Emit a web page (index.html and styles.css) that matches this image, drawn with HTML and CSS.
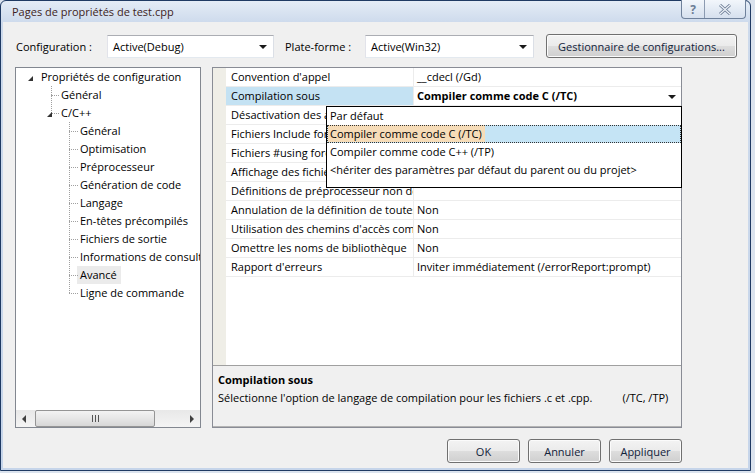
FILE: index.html
```html
<!DOCTYPE html>
<html lang="fr">
<head>
    <meta charset="UTF-8">
    <link rel="stylesheet" href="styles.css">
    <title>Pages de propriétés de test.cpp</title>
</head>
<body>
    <div class="window">
        <div class="titlebar">
            <span class="title">Pages de propriétés de test.cpp</span>
            <div class="caption">
                <span class="cap-btn cap-help">?</span>
                <span class="cap-btn cap-close">
                    <svg width="14" height="11" viewBox="0 0 14 11">
                        <path d="M2 1 L12 10 M12 1 L2 10" stroke="#6c7d96" stroke-width="3" fill="none"/>
                        <path d="M2 1 L12 10 M12 1 L2 10" stroke="#eef2f8" stroke-width="1.2" fill="none"/>
                    </svg>
                </span>
            </div>
        </div>

        <div class="client">
            <!-- configuration / plate-forme -->
            <div class="toolbar">
                <span class="lbl lbl-config">Configuration :</span>
                <div class="combo combo-config">Active(Debug)<span class="arrow"></span></div>
                <span class="lbl lbl-platform">Plate-forme :</span>
                <div class="combo combo-platform">Active(Win32)<span class="arrow"></span></div>
                <button class="btn btn-manager">Gestionnaire de configurations...</button>
            </div>

            <div class="main">
                <!-- arbre de navigation -->
                <div class="tree">
                    <div class="tree-list">
                        <div class="row lvl0"><span class="exp"></span>Propriétés de configuration</div>
                        <div class="group g1">
                            <div class="row lvl1">Général</div>
                            <div class="row lvl1"><span class="exp"></span>C/C++</div>
                        </div>
                        <div class="group g2">
                            <div class="row lvl2">Général</div>
                            <div class="row lvl2">Optimisation</div>
                            <div class="row lvl2">Préprocesseur</div>
                            <div class="row lvl2">Génération de code</div>
                            <div class="row lvl2">Langage</div>
                            <div class="row lvl2">En-têtes précompilés</div>
                            <div class="row lvl2">Fichiers de sortie</div>
                            <div class="row lvl2">Informations de consultation</div>
                            <div class="row lvl2"><span class="selected">Avancé</span></div>
                            <div class="row lvl2">Ligne de commande</div>
                        </div>
                    </div>
                    <div class="hscroll">
                        <span class="sb-arrow sb-left"></span>
                        <span class="sb-thumb"><span class="grip"></span></span>
                        <span class="sb-arrow sb-right"></span>
                    </div>
                </div>

                <!-- grille de propriétés -->
                <div class="pane">
                    <div class="grid">
                        <div class="prop"><span class="gut"></span><span class="name">Convention d'appel</span><span class="val">__cdecl (/Gd)</span></div>
                        <div class="prop active"><span class="gut"></span><span class="name">Compilation sous</span><span class="val">Compiler comme code C (/TC)<span class="arrow"></span></span></div>
                        <div class="prop"><span class="gut"></span><span class="name">Désactivation des avertissements spécifiques</span><span class="val"></span></div>
                        <div class="prop"><span class="gut"></span><span class="name">Fichiers Include forcés</span><span class="val"></span></div>
                        <div class="prop"><span class="gut"></span><span class="name">Fichiers #using forcés</span><span class="val"></span></div>
                        <div class="prop"><span class="gut"></span><span class="name">Affichage des fichiers Include</span><span class="val"></span></div>
                        <div class="prop"><span class="gut"></span><span class="name">Définitions de préprocesseur non définies</span><span class="val"></span></div>
                        <div class="prop"><span class="gut"></span><span class="name">Annulation de la définition de toutes</span><span class="val">Non</span></div>
                        <div class="prop"><span class="gut"></span><span class="name">Utilisation des chemins d'accès complets</span><span class="val">Non</span></div>
                        <div class="prop"><span class="gut"></span><span class="name">Omettre les noms de bibliothèque</span><span class="val">Non</span></div>
                        <div class="prop"><span class="gut"></span><span class="name">Rapport d'erreurs</span><span class="val">Inviter immédiatement (/errorReport:prompt)</span></div>
                        <div class="gutter-fill"></div>

                        <div class="dropdown">
                            <div class="opt">Par défaut</div>
                            <div class="opt current"><span class="hot">Compiler comme code C (/TC)</span></div>
                            <div class="opt">Compiler comme code C++ (/TP)</div>
                            <div class="opt">&lt;hériter des paramètres par défaut du parent ou du projet&gt;</div>
                        </div>
                    </div>
                    <div class="desc">
                        <div class="desc-title">Compilation sous</div>
                        <div>Sélectionne l'option de langage de compilation pour les fichiers .c et .cpp.<span class="switches">(/TC, /TP)</span></div>
                    </div>
                </div>
            </div>

            <div class="footer">
                <button class="btn">OK</button>
                <button class="btn">Annuler</button>
                <button class="btn">Appliquer</button>
            </div>
        </div>
    </div>
</body>
</html>
```

FILE: styles.css
```css
* {
    box-sizing: border-box;
}

body {
    margin: 0;
    width: 755px;
    height: 473px;
    overflow: hidden;
    background: #dbe3ee;
    font-family: "Open Sans", "Noto Sans", sans-serif;
    font-size: 11px;
    color: #000;
}

/* fenêtre */
.window {
    width: 751px;
    height: 471px;
    border: 1px solid #1f3a63;
    border-radius: 6px 6px 0 0;
    background: linear-gradient(#e4ecf6, #cddaec 22px, #c6d5ea);
    display: flex;
    flex-direction: column;
}

.titlebar {
    height: 21px;
    position: relative;
}

.title {
    display: block;
    padding: 3px 0 0 11px;
    color: #3e1d22;
}

.caption {
    position: absolute;
    top: -1px;
    right: 4px;
    display: flex;
    border: 1px solid #6f819b;
    border-top: none;
    border-radius: 0 0 4px 4px;
    overflow: hidden;
    background: linear-gradient(#f2f6fb, #d6e0ee);
}

.cap-btn {
    height: 18px;
    display: flex;
    align-items: center;
    justify-content: center;
}

.cap-help {
    width: 23px;
    border-right: 1px solid #8c9bb1;
    color: #6c7d96;
    font-size: 12px;
    font-weight: bold;
}

.cap-close {
    width: 40px;
}

.client {
    flex: 1;
    margin: 0 2px 2px;
    background: #f0f0f0;
}

/* barre du haut */
.toolbar {
    display: flex;
    align-items: center;
    height: 24px;
    margin: 12px 0 0 13px;
}

.lbl-config {
    width: 91px;
}

.lbl-platform {
    width: 80px;
    margin-left: 11px;
}

.combo {
    position: relative;
    height: 23px;
    line-height: 21px;
    padding-left: 5px;
    background: #fff;
    border: 1px solid #abadb3;
    border-color: #abadb3 #dbdfe6 #e3e9ef #e2e3ea;
}

.combo-config {
    width: 167px;
}

.combo-platform {
    width: 169px;
}

.arrow {
    position: absolute;
    right: 6px;
    top: 9px;
    width: 0;
    height: 0;
    border-left: 4px solid transparent;
    border-right: 4px solid transparent;
    border-top: 4px solid #1a1a1a;
}

.btn {
    height: 24px;
    padding: 0;
    font: inherit;
    color: #12233b;
    border: 1px solid #707070;
    border-radius: 3px;
    background: linear-gradient(#f3f3f3 0%, #ebebeb 48%, #dddddd 52%, #cfcfcf 100%);
    box-shadow: inset 0 0 0 1px #fbfbfb;
}

.btn-manager {
    width: 191px;
    margin-left: 12px;
}

/* zone principale */
.main {
    display: flex;
    gap: 11px;
    height: 361px;
    margin: 9px 0 0 12px;
}

.tree {
    width: 186px;
    display: flex;
    flex-direction: column;
    background: #fff;
    border: 1px solid #828790;
}

.tree-list {
    flex: 1;
    overflow: hidden;
}

.row {
    position: relative;
    height: 18px;
    line-height: 18px;
    white-space: nowrap;
}

.lvl0 {
    padding-left: 25px;
}

.lvl1 {
    padding-left: 45px;
}

.lvl2 {
    padding-left: 64px;
}

.lvl1::before,
.lvl2::before {
    content: "";
    position: absolute;
    top: 9px;
    border-top: 1px dotted #a0a0a0;
}

.lvl1::before {
    left: 35px;
    width: 8px;
}

.lvl2::before {
    left: 53px;
    width: 9px;
}

.group {
    position: relative;
}

.group::before {
    content: "";
    position: absolute;
    top: 0;
    bottom: 9px;
    border-left: 1px dotted #a0a0a0;
}

.g1::before {
    left: 35px;
}

.g2::before {
    left: 53px;
}

.exp {
    position: absolute;
    top: 8px;
    width: 0;
    height: 0;
    border-left: 5px solid transparent;
    border-bottom: 5px solid #333;
    z-index: 1;
}

.lvl0 .exp {
    left: 12px;
}

.lvl1 .exp {
    left: 31px;
}

.selected {
    display: inline-block;
    margin-left: -3px;
    padding: 0 4px 0 3px;
    background: #ebebeb;
}

.hscroll {
    height: 17px;
    display: flex;
    align-items: center;
    position: relative;
    background: linear-gradient(#e8e8e8, #f4f4f4);
}

.sb-arrow {
    position: absolute;
    top: 5px;
    width: 0;
    height: 0;
    border-top: 4px solid transparent;
    border-bottom: 4px solid transparent;
}

.sb-left {
    left: 6px;
    border-right: 4px solid #404040;
}

.sb-right {
    right: 6px;
    border-left: 4px solid #404040;
}

.sb-thumb {
    position: absolute;
    left: 19px;
    top: 0;
    width: 120px;
    height: 17px;
    border: 1px solid #959595;
    border-radius: 2px;
    background: linear-gradient(#f3f3f3, #e6e6e6 50%, #d7d7d7);
    display: flex;
    align-items: center;
    justify-content: center;
}

.grip {
    width: 7px;
    height: 7px;
    background: repeating-linear-gradient(90deg, #555 0 1px, transparent 1px 3px);
}

/* grille */
.pane {
    width: 470px;
    display: flex;
    flex-direction: column;
    border: 1px solid #898c95;
}

.grid {
    flex: 1;
    position: relative;
    background: #fff;
    display: flex;
    flex-direction: column;
}

.prop {
    display: grid;
    grid-template-columns: 13px 188px 1fr;
    height: 19px;
    line-height: 18px;
    white-space: nowrap;
}

.gut {
    background: #efeee7;
}

.gutter-fill {
    width: 13px;
    flex: 1;
    background: #efeee7;
}

.name,
.val {
    overflow: hidden;
    border-bottom: 1px solid #ececec;
}

.name {
    padding-left: 5px;
    border-right: 1px solid #ececec;
}

.val {
    position: relative;
    padding-left: 3px;
}

.active .name {
    background: #c4e2f3;
}

.active .val {
    font-weight: bold;
}

.active .arrow {
    top: 8px;
    right: 5px;
}

.dropdown {
    position: absolute;
    left: 113px;
    top: 38px;
    width: 356px;
    height: 82px;
    background: #fff;
    border: 1px solid #000;
}

.opt {
    height: 18px;
    line-height: 18px;
    padding-left: 3px;
    white-space: nowrap;
}

.opt.current {
    padding-left: 1px;
    background: #c5e4f5;
    outline: 1px dotted #333;
    outline-offset: -1px;
}

.hot {
    display: inline-block;
    height: 17px;
    padding: 0 3px 0 2px;
    background: #f6dcb8;
}

.desc {
    height: 62px;
    padding: 5px 5px 0;
    line-height: 18px;
    background: #f0f0f0;
    border-top: 1px solid #a0a0a0;
    border-bottom: 1px solid #b4b4b4;
}

.desc-title {
    font-weight: bold;
}

.switches {
    margin-left: 30px;
}

/* boutons */
.footer {
    display: flex;
    justify-content: flex-end;
    gap: 8px;
    margin: 11px 66px 0 0;
}

.footer .btn {
    width: 73px;
}
```
